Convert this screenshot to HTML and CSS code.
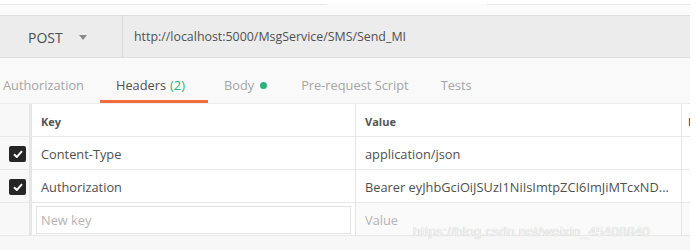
FILE: index.html
```html
<!DOCTYPE html>
<html>
<head>
<meta charset="utf-8">
<link rel="stylesheet" href="styles.css">
</head>
<body>
<div class="app">
  <div class="topstrip"><span class="tline a"></span><span class="tline b"></span></div>
  <div class="urlbar">
    <div class="method">POST <span class="caret"></span></div>
    <div class="url">http://localhost:5000/MsgService/SMS/Send_MI</div>
  </div>
  <div class="tabs">
    <div class="tab first">Authorization</div>
    <div class="tab active">Headers <span class="count">(2)</span></div>
    <div class="tab">Body <span class="dot"></span></div>
    <div class="tab">Pre-request Script</div>
    <div class="tab">Tests</div>
  </div>
  <div class="table">
    <div class="row head">
      <div class="cell chk"></div>
      <div class="cell key">Key</div>
      <div class="cell val">Value</div>
      <div class="cell desc">Description</div>
    </div>
    <div class="row">
      <div class="cell chk"><span class="box"><svg width="10" height="8" viewBox="0 0 10 8"><path d="M1 4.2 L3.8 7 L9 1.2" fill="none" stroke="#fff" stroke-width="2"/></svg></span></div>
      <div class="cell key">Content-Type</div>
      <div class="cell val">application/json</div>
      <div class="cell desc"></div>
    </div>
    <div class="row">
      <div class="cell chk"><span class="box"><svg width="10" height="8" viewBox="0 0 10 8"><path d="M1 4.2 L3.8 7 L9 1.2" fill="none" stroke="#fff" stroke-width="2"/></svg></span></div>
      <div class="cell key">Authorization</div>
      <div class="cell val">Bearer eyJhbGciOiJSUzI1NiIsImtpZCI6ImJiMTcxND...</div>
      <div class="cell desc"></div>
    </div>
    <div class="row new">
      <div class="cell chk"></div>
      <div class="cell key"><div class="input">New key</div></div>
      <div class="cell val ph">Value</div>
      <div class="cell desc"></div>
    </div>
  </div>
  <div class="bottom"></div>
  <div class="watermark">https://blog.csdn.net/weixin_45408840</div>
</div>
</body>
</html>
```

FILE: styles.css
```css
html, body {
  margin: 0;
  padding: 0;
  background: #fff;
}
body {
  font-family: "Open Sans", "Noto Sans", sans-serif;
  color: #505050;
}
.app {
  width: 690px;
  height: 250px;
  position: relative;
  background: #f8f8f8;
  overflow: hidden;
}
.topstrip {
  height: 16px;
  background: #fbfbfb;
  border-top: 4px solid #fff;
  box-sizing: border-box;
  border-bottom: 1px solid #dedede;
  display: flex;
  align-items: flex-start;
}
.tline {
  display: block;
  height: 1px;
  background: #e8e8e8;
}
.tline.a { width: 327px; }
.tline.b { width: 203px; margin-left: 160px; }
.urlbar {
  height: 41px;
  background: #ececec;
  border-bottom: 1px solid #dcdcdc;
  display: flex;
  align-items: center;
}
.method {
  width: 94px;
  height: 100%;
  padding-left: 28px;
  padding-top: 2px;
  box-sizing: content-box;
  border-right: 1px solid #d9d9d9;
  display: flex;
  align-items: center;
  font-size: 14px;
  color: #4e4e4e;
}
.caret {
  display: inline-block;
  margin-left: 16px;
  width: 0;
  height: 0;
  border-left: 4px solid transparent;
  border-right: 4px solid transparent;
  border-top: 5px solid #8a8a8a;
}
.url {
  padding-left: 11px;
  font-size: 12.4px;
  color: #505050;
}
.tabs {
  height: 45px;
  display: flex;
  background: #f9f9f9;
  border-bottom: 1px solid #ececec;
}
.tab {
  padding: 12px 16px 0 16px;
  display: flex;
  align-items: center;
  font-size: 12.8px;
  color: #a6a6a6;
  box-sizing: border-box;
  border-bottom: 3px solid transparent;
  white-space: nowrap;
}
.tab.first { margin-left: -13px; }
.tab.active {
  color: #505050;
  border-bottom-color: #f26b3a;
  padding-right: 23px;
}
.count {
  color: #26b47f;
  margin-left: 4px;
}
.dot {
  display: inline-block;
  width: 7px;
  height: 7px;
  border-radius: 50%;
  background: #26b47f;
  margin-left: 6px;
  margin-right: 2px;
}
.table {
  background: #fff;
}
.row {
  display: grid;
  grid-template-columns: 32px 324px 326px 1fr;
  height: 33px;
  border-bottom: 1px solid #e8e8e8;
  box-sizing: border-box;
}
.cell {
  display: flex;
  align-items: center;
  font-size: 12.8px;
  color: #505050;
  overflow: hidden;
  white-space: nowrap;
  box-sizing: border-box;
  padding-top: 1px;
}
.cell.chk {
  background: #f8f8f8;
  border-right: 3px solid #e6e6e6;
  padding-left: 9px;
}
.cell.key {
  padding-left: 9px;
  border-right: 1px solid #e6e6e6;
}
.cell.val {
  padding-left: 9px;
  border-right: 1px solid #e6e6e6;
}
.cell.desc {
  padding-left: 6px;
  color: #505050;
}
.row.head .cell {
  font-size: 11px;
  font-weight: bold;
  color: #555;
  padding-top: 3px;
}
.box {
  width: 17px;
  height: 16px;
  background: #262626;
  border-radius: 2px;
  display: flex;
  align-items: center;
  justify-content: center;
}
.row.new .cell.key {
  padding: 3px 4px 1px 4px;
  align-items: stretch;
}
.input {
  flex: 1;
  background: #fff;
  border: 1px solid #e3e3e3;
  display: flex;
  align-items: center;
  padding-left: 4px;
  color: #b4b4b4;
  font-size: 12.8px;
}
.row.new .cell.val,
.row.new .cell.desc {
  background: #fafafa;
}
.row.new .cell.ph { color: #b4b4b4; }
.bottom {
  height: 15px;
  background: #f7f7f7;
}
.watermark {
  position: absolute;
  left: 413px;
  top: 224px;
  font-family: "Liberation Sans", Arial, sans-serif;
  font-size: 13.5px;
  color: #f6f6f6;
  text-shadow: 0 0 1px #b0b0b0;
  letter-spacing: 0.2px;
  white-space: nowrap;
}
```
